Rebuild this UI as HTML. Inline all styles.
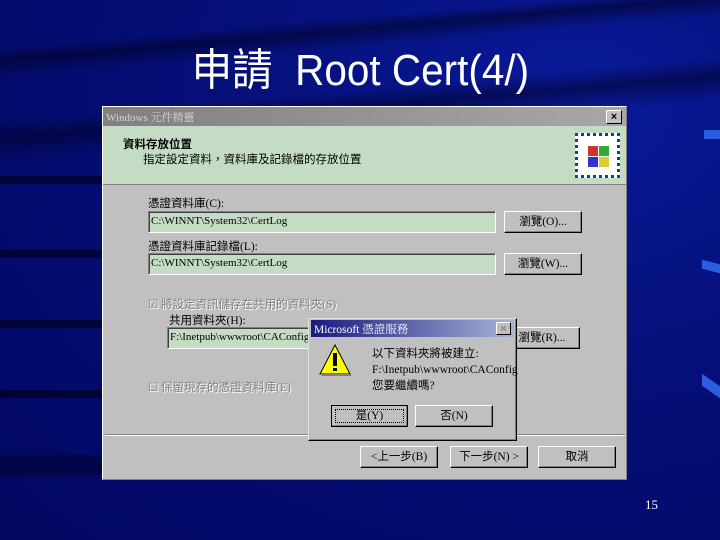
<!DOCTYPE html>
<html><head><meta charset="utf-8"><style>
*{margin:0;padding:0;box-sizing:border-box}
body{width:720px;height:540px;overflow:hidden;background:#03086e;position:relative;font-family:"Liberation Serif","Noto Serif CJK SC",serif}
.bg{position:absolute;inset:0;background:
linear-gradient(175deg,transparent 0 8%,rgba(0,0,30,.55) 10%,transparent 13% 20%,rgba(0,0,30,.5) 23%,transparent 27%),
radial-gradient(ellipse at 80% 20%,#0a1a9a 0,#05107a 40%,#020660 100%)}
.stripe{position:absolute;left:0;width:102px;height:8px;background:rgba(0,0,20,.6)}
.rs{position:absolute;right:0;width:18px;height:9px;background:#2b5de0}
.a{position:absolute}
.title{position:absolute;left:0;width:720px;top:34px;text-align:center;color:#fff;font-size:44px;font-family:"Liberation Sans Narrow","Liberation Sans","Noto Sans CJK TC",sans-serif;}
.title span{display:inline-block;transform:scaleX(.92)}
.win{left:102px;top:106px;width:525px;height:374px;background:#c0c0c0;border:1px solid #fff;border-right-color:#808080;border-bottom-color:#808080}
.tb{left:0;top:0;width:523px;height:19px;background:linear-gradient(90deg,#808080,#a8a8a8);color:#d4d4d4;font-size:11px;padding:2px 3px}
.x{width:16px;height:14px;background:#c0c0c0;border:1px solid #fff;border-right-color:#000;border-bottom-color:#000;font:bold 11px "Liberation Sans",sans-serif;text-align:center;line-height:12px;color:#000}
.hdr{left:0;top:19px;width:523px;height:59px;background:#c4dcc4;border-bottom:1px solid #808080}
.t{font-size:11.5px;color:#000;white-space:nowrap;font-family:"Liberation Serif","Noto Sans CJK TC",serif}
.in{height:22px;background:#c4dcc4;border:1px solid #808080;border-right-color:#fff;border-bottom-color:#fff;box-shadow:inset 1px 1px #404040;font-size:11px;padding:3px 2px;white-space:nowrap;overflow:hidden}
.btn{height:22px;background:#c0c0c0;border:1px solid #fff;border-right-color:#000;border-bottom-color:#000;box-shadow:inset -1px -1px #808080;font-size:11.5px;text-align:center;line-height:20px;font-family:"Liberation Serif","Noto Sans CJK TC",serif}
.g{color:#808080;text-shadow:1px 1px #fff}
.pop{left:308px;top:318px;width:209px;height:123px;background:#c0c0c0;border:1px solid #dfdfdf;border-right-color:#000;border-bottom-color:#000;box-shadow:inset -1px -1px #808080}
</style></head><body>
<div class="bg"></div>
<div class="stripe" style="top:176px"></div><div class="stripe" style="top:250px"></div><div class="stripe" style="top:320px"></div><div class="stripe" style="top:390px"></div><div class="stripe" style="top:455px;height:20px;opacity:.6"></div>
<div class="rs" style="top:130px;width:16px"></div><div class="rs" style="top:262px;transform:skewY(15deg)"></div><div class="rs" style="top:380px;transform:skewY(35deg);height:12px"></div>
<div class="title"><span>申請&nbsp; Root Cert(4/)</span></div>
<div class="a win">
 <div class="a tb">Windows 元件精靈</div>
 <div class="a x" style="left:503px;top:3px">×</div>
 <div class="a hdr">
  <div class="a t" style="left:20px;top:10px;font-weight:bold">資料存放位置</div>
  <div class="a t" style="left:40px;top:25px">指定設定資料，資料庫及記錄檔的存放位置</div>
  <div class="a" style="left:472px;top:7px;width:45px;height:45px;border:3px dotted #1040a0;background:#fff">
   <div class="a" style="left:10px;top:10px;width:10px;height:10px;background:#c33"></div><div class="a" style="left:21px;top:10px;width:10px;height:10px;background:#3a3"></div><div class="a" style="left:10px;top:21px;width:10px;height:10px;background:#33c"></div><div class="a" style="left:21px;top:21px;width:10px;height:10px;background:#dc3"></div>
  </div>
 </div>
 <div class="a t" style="left:45px;top:88px">憑證資料庫(C):</div>
 <div class="a in" style="left:45px;top:104px;width:348px">C:\WINNT\System32\CertLog</div>
 <div class="a btn" style="left:401px;top:104px;width:78px">瀏覽(O)...</div>
 <div class="a t" style="left:45px;top:131px">憑證資料庫記錄檔(L):</div>
 <div class="a in" style="left:45px;top:146px;width:348px">C:\WINNT\System32\CertLog</div>
 <div class="a btn" style="left:401px;top:146px;width:78px">瀏覽(W)...</div>
 <div class="a t g" style="left:45px;top:189px">☑ 將設定資訊儲存在共用的資料夾(S)</div>
 <div class="a t" style="left:66px;top:205px">共用資料夾(H):</div>
 <div class="a in" style="left:64px;top:220px;width:160px">F:\Inetpub\wwwroot\CAConfig</div>
 <div class="a btn" style="left:401px;top:220px;width:76px">瀏覽(R)...</div>
 <div class="a t g" style="left:45px;top:272px">☐ 保留現存的憑證資料庫(E)</div>
 <div class="a" style="left:2px;top:327px;width:520px;border-top:1px solid #808080;border-bottom:1px solid #fff"></div>
 <div class="a btn" style="left:257px;top:339px;width:78px">&lt;上一步(B)</div>
 <div class="a btn" style="left:347px;top:339px;width:78px">下一步(N) &gt;</div>
 <div class="a btn" style="left:435px;top:339px;width:78px">取消</div>
</div>
<div class="a pop">
 <div class="a" style="left:2px;top:1px;width:203px;height:17px;background:linear-gradient(90deg,#1a1a80,#a6b4d8);color:#fff;font-size:11.5px;padding:1px 3px" >Microsoft 憑證服務</div>
 <div class="a x" style="left:187px;top:3px;width:15px;height:13px;color:#888">×</div>
 <svg class="a" style="left:10px;top:25px" width="34" height="34"><polygon points="16,1 31,30 1,30" fill="#ff0" stroke="#000"/><polygon points="31,30 33,32 3,32 1,30" fill="#808080"/><rect x="14" y="9" width="4" height="13" fill="#000"/><rect x="14" y="24" width="4" height="3" fill="#000"/></svg>
 <div class="a t" style="left:63px;top:27px;line-height:16px">以下資料夾將被建立:<br>F:\Inetpub\wwwroot\CAConfig<br>您要繼續嗎?</div>
 <div class="a btn" style="left:22px;top:86px;width:77px;border:1px solid #000;outline:1px dotted #000;outline-offset:-5px">是(Y)</div>
 <div class="a btn" style="left:106px;top:86px;width:78px">否(N)</div>
</div>
<div class="a" style="left:645px;top:497px;color:#fff;font-size:13px">15</div>
</body></html>
